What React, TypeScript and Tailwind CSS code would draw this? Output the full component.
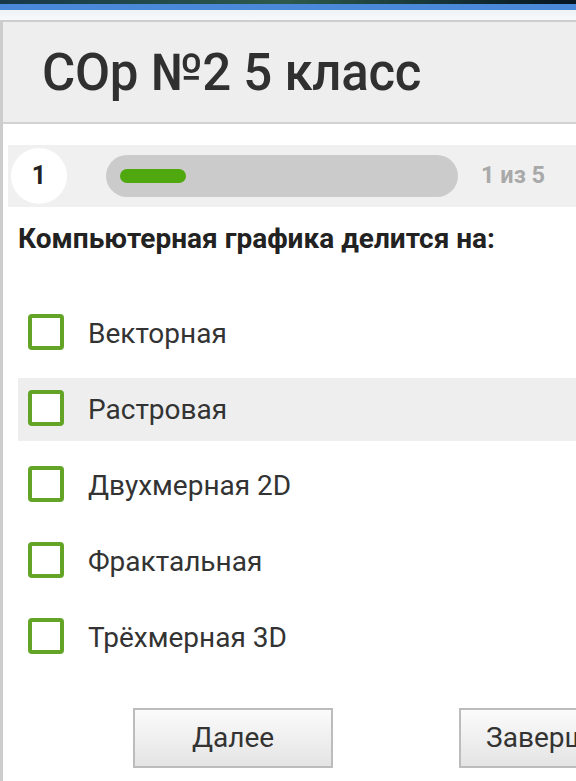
const options = ["Векторная", "Растровая", "Двухмерная 2D", "Фрактальная", "Трёхмерная 3D"];

function Checkbox() {
  return <div className="-mt-[4px] h-[36px] w-[36px] shrink-0 rounded-[4px] border-[4px] border-[#63a325] bg-white" />;
}

export default function App() {
  return (
    <div className="h-[781px] w-[576px] overflow-hidden bg-white font-['Roboto',sans-serif] text-[#333]">
      <div className="h-[4px] bg-gradient-to-r from-[#173848] via-[#2d5a4c] to-[#061522]" />
      <div className="h-[6px] bg-[#4a88da]" />
      <div className="h-[10px] bg-gradient-to-b from-[#eef2f5] to-[#f8f9fa]" />

      <div className="h-[761px] border-l-[3px] border-t-[2px] border-[#cdcdcd]">
        <header className="flex h-[102px] items-center border-b-[2px] border-[#d2d2d2] bg-[#eeeeee] pl-[39px]">
          <h1 className="text-[51px] font-medium leading-none tracking-[-0.3px] text-[#303030]">СОр №2 5 класс</h1>
        </header>

        <div className="ml-[5px] mt-[21px] flex h-[62px] items-center bg-[#f0f0f0]">
          <div className="ml-[3px] flex h-[56px] w-[56px] items-center justify-center rounded-full bg-white text-[25px] font-bold text-[#222]">
            1
          </div>
          <div className="ml-[39px] flex h-[42px] w-[352px] items-center rounded-full bg-[#cbcbcb] px-[14px]">
            <div className="h-[14px] w-[66px] rounded-full bg-[#4fa80e]" />
          </div>
          <span className="ml-[23px] text-[23.5px] font-bold text-[#a9a9a9]">1 из 5</span>
        </div>

        <p className="ml-[15px] mt-[14px] whitespace-nowrap text-[28px] font-bold leading-[36px] text-[#222]">
          Компьютерная графика делится на:
        </p>

        <div className="ml-[15px] mt-[45px] flex flex-col gap-[13px]">
          {options.map((o, i) => (
            <div
              key={o}
              className={`flex h-[63px] items-center gap-[24px] pl-[10px] ${i === 1 ? "bg-[#eeeeee]" : ""}`}
            >
              <Checkbox />
              <span className="text-[28px] text-[#333]">{o}</span>
            </div>
          ))}
        </div>

        <div className="ml-[130px] mt-[39px] flex gap-[126px]">
          <button className="h-[60px] w-[200px] shrink-0 border-[2px] border-[#bcbcbc] bg-gradient-to-b from-[#fbfbfb] to-[#e4e4e4] text-[28px] text-[#333]">
            Далее
          </button>
          <button className="h-[60px] w-[200px] shrink-0 whitespace-nowrap border-[2px] border-[#bcbcbc] bg-gradient-to-b from-[#fbfbfb] to-[#e4e4e4] text-[28px] text-[#333]">
            Завершить
          </button>
        </div>
      </div>
    </div>
  );
}
